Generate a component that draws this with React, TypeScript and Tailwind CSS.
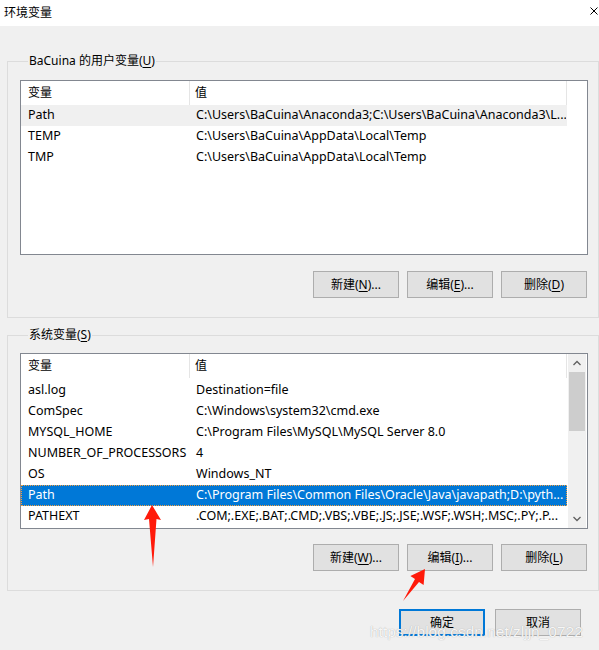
import { FC, ReactNode } from 'react';

const FONT = "font-['Noto_Sans','Noto_Sans_CJK_SC',sans-serif]";

type Row = { name: string; value: string };

const userRows: Row[] = [
  { name: 'Path', value: 'C:\\Users\\BaCuina\\Anaconda3;C:\\Users\\BaCuina\\Anaconda3\\L...' },
  { name: 'TEMP', value: 'C:\\Users\\BaCuina\\AppData\\Local\\Temp' },
  { name: 'TMP', value: 'C:\\Users\\BaCuina\\AppData\\Local\\Temp' },
];

const sysRows: Row[] = [
  { name: 'asl.log', value: 'Destination=file' },
  { name: 'ComSpec', value: 'C:\\Windows\\system32\\cmd.exe' },
  { name: 'MYSQL_HOME', value: 'C:\\Program Files\\MySQL\\MySQL Server 8.0' },
  { name: 'NUMBER_OF_PROCESSORS', value: '4' },
  { name: 'OS', value: 'Windows_NT' },
  { name: 'Path', value: 'C:\\Program Files\\Common Files\\Oracle\\Java\\javapath;D:\\pyth...' },
  { name: 'PATHEXT', value: '.COM;.EXE;.BAT;.CMD;.VBS;.VBE;.JS;.JSE;.WSF;.WSH;.MSC;.PY;.P...' },
];

const Key: FC<{ k: string }> = ({ k }) => <span className="underline underline-offset-2">{k}</span>;

const Btn: FC<{ children: ReactNode; primary?: boolean }> = ({ children, primary }) => (
  <button
    className={`h-[27px] w-[86px] flex items-center justify-center text-[12px] text-black bg-[#e1e1e1] ${
      primary ? 'border-2 border-[#0078d7]' : 'border border-[#adadad]'
    }`}
  >
    {children}
  </button>
);

const Header: FC = () => (
  <div className="flex h-[24px] w-[546px] items-center text-[12px] text-black bg-white">
    <div className="w-[169px] h-full flex items-center pl-[7px] border-r border-[#e5e5e5]">变量</div>
    <div className="flex-1 h-full flex items-center pl-[5px] border-r border-[#e5e5e5]">值</div>
  </div>
);

const ListRow: FC<{ row: Row; state?: 'soft' | 'active' }> = ({ row, state }) => {
  const bg =
    state === 'active'
      ? 'bg-[#0078d7] text-white border border-dotted border-[#f5a040]'
      : state === 'soft'
        ? 'bg-[#f0f0f0] text-black border border-transparent'
        : 'text-black border border-transparent';
  return (
    <div className={`flex h-[21px] w-[546px] items-center text-[12.5px] whitespace-nowrap ${bg}`}>
      <div className="w-[168px] pl-[6px] overflow-hidden">{row.name}</div>
      <div className="flex-1 pl-[6px] overflow-hidden">{row.value}</div>
    </div>
  );
};

const App: FC = () => {
  return (
    <div className={`relative w-[599px] h-[650px] bg-[#f0f0f0] overflow-hidden ${FONT}`}>
      {/* title bar */}
      <div className="h-[26px] bg-white flex items-center justify-between pl-[4px] pr-[1px]">
        <span className="text-[12px] text-black leading-none">环境变量</span>
        <svg width="8" height="8" viewBox="0 0 8 8" className="mb-[4px]">
          <path d="M0.5 0.5 L7.5 7.5 M7.5 0.5 L0.5 7.5" stroke="#000" strokeWidth="1" />
        </svg>
      </div>

      <div className="pl-[7px] pt-[28px]">
        {/* user variables */}
        <fieldset className="w-[592px] h-[264px] border border-[#dcdcdc] pl-[12px]">
          <legend className="ml-[8px] px-[1px] text-[12px] text-black leading-[14px]">
            BaCuina 的用户变量(<Key k="U" />)
          </legend>
          <div className="mt-[12px] w-[568px] h-[175px] border border-[#828790] bg-white">
            <Header />
            {userRows.map((r, i) => (
              <ListRow key={r.name} row={r} state={i === 0 ? 'soft' : undefined} />
            ))}
          </div>
          <div className="w-[567px] flex justify-end gap-[8px] mt-[16px]">
            <Btn>新建(<Key k="N" />)...</Btn>
            <Btn>编辑(<Key k="E" />)...</Btn>
            <Btn>删除(<Key k="D" />)</Btn>
          </div>
        </fieldset>

        {/* system variables */}
        <fieldset className="mt-[10px] w-[592px] h-[263px] border border-[#dcdcdc] pl-[12px]">
          <legend className="ml-[8px] px-[1px] text-[12px] text-black leading-[14px]">
            系统变量(<Key k="S" />)
          </legend>
          <div className="mt-[11px] w-[568px] h-[176px] border border-[#828790] bg-white flex">
            <div className="w-[547px] flex flex-col">
              <Header />
              <div className="h-[2px]" />
              {sysRows.map((r, i) => (
                <ListRow key={r.name} row={r} state={i === 5 ? 'active' : undefined} />
              ))}
            </div>
            <div className="w-[18px] bg-[#f0f0f0] flex flex-col items-center">
              <div className="h-[18px] flex items-center justify-center">
                <svg width="8" height="6" viewBox="0 0 8 6">
                  <path d="M0.5 5 L4 1.5 L7.5 5" fill="none" stroke="#606060" strokeWidth="1.3" />
                </svg>
              </div>
              <div className="w-[16px] h-[59px] bg-[#cdcdcd]" />
              <div className="flex-1" />
              <div className="h-[18px] flex items-center justify-center">
                <svg width="8" height="6" viewBox="0 0 8 6">
                  <path d="M0.5 1 L4 4.5 L7.5 1" fill="none" stroke="#606060" strokeWidth="1.3" />
                </svg>
              </div>
            </div>
          </div>
          <div className="w-[567px] flex justify-end gap-[8px] mt-[15px]">
            <Btn>新建(<Key k="W" />)...</Btn>
            <Btn>编辑(<Key k="I" />)...</Btn>
            <Btn>删除(<Key k="L" />)</Btn>
          </div>
        </fieldset>

        <div className="w-[574px] flex justify-end gap-[10px] mt-[18px]">
          <div className="h-[28px]">
            <Btn primary>确定</Btn>
          </div>
          <Btn>取消</Btn>
        </div>
      </div>

      {/* watermark */}
      <div className="absolute left-[370px] top-[620px] text-[15.5px] font-['Liberation_Sans',sans-serif] text-white/90 [text-shadow:0_0_1px_#9a9a9a] pointer-events-none">
        https://blog.csdn.net/zljjn_0722
      </div>

      {/* red annotation arrows */}
      <svg className="absolute left-0 top-0 pointer-events-none" width="599" height="650" viewBox="0 0 599 650">
        <polygon points="152,505 161,520 156.5,519 153,567 149,519 144,520" fill="#ff1a0a" />
        <polygon points="425,569 423.6,585 419,582 403,601 415,579 410.4,576" fill="#ff1a0a" />
      </svg>
    </div>
  );
};

export default App;
